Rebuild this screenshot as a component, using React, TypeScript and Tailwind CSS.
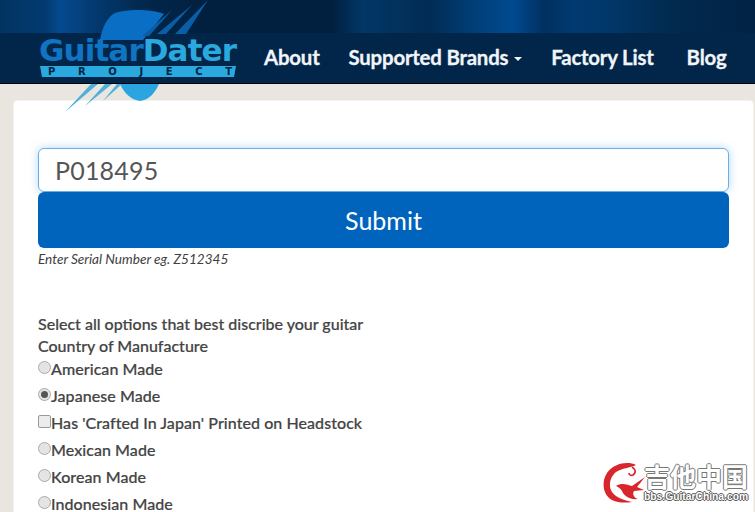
const options = [
  { type: "radio", label: "American Made", checked: false },
  { type: "radio", label: "Japanese Made", checked: true },
  { type: "checkbox", label: "Has 'Crafted In Japan' Printed on Headstock", checked: false },
  { type: "radio", label: "Mexican Made", checked: false },
  { type: "radio", label: "Korean Made", checked: false },
  { type: "radio", label: "Indonesian Made", checked: false },
];

function Logo() {
  return (
    <div className="absolute left-[39px] top-0 w-[200px] h-[114px]">
      <svg width="200" height="114" viewBox="0 0 200 114" className="absolute left-0 top-0">
        {/* pick, top half */}
        <path d="M61 40C63 28 68 17 76 13C88 9 112 9 125 14L104 40Z" fill="#0a6fc4" />
        {/* streaks, top half */}
        <path d="M169 0L147 34L136 34ZM153 5L127 34L118 34ZM133 10L110 36L103 36Z" fill="#0a5ea8" />
        {/* pick, bottom half */}
        <path d="M81 84H120C116 93 110 100 101 101C92 100 85 93 81 84Z" fill="#2aa5e0" />
        {/* streaks, bottom half */}
        <path d="M52 84H59L26 112ZM66 84H73L46 106ZM78 84H83L64 101Z" fill="#4fb0dc" />
        {/* project banner */}
        <path d="M1 66H197L195 77H3Z" fill="#2aa9df" />
      </svg>
      <div className="absolute left-0 top-[35px] flex font-['DejaVu_Sans',sans-serif] font-bold text-[31px] leading-[30px] tracking-[-0.9px]">
        <span className="text-[#0f74c4]">Guitar</span>
        <span className="text-[#2aa9df]">Dater</span>
      </div>
      <div className="absolute left-[9px] top-[66px] w-[184px] h-[11px] flex justify-between font-['DejaVu_Sans',sans-serif] font-bold text-[10px] leading-[11px] text-[#02233f]">
        {"PROJECT".split("").map((c, i) => (
          <span key={i}>{c}</span>
        ))}
      </div>
    </div>
  );
}

function Dragon() {
  return (
    <svg width="44" height="42" viewBox="0 0 44 42" className="shrink-0">
      <path
        d="M34 3C26 -1 12 1 5 11C-1 20 1 33 10 38C16 41 24 41 30 40C22 38 14 36 10 30C6 24 8 15 14 10C20 6 28 6 34 3Z"
        fill="#d8262c"
      />
      <path d="M30 5C33 7 35 10 31 13C29 14 27 13 27 11" fill="none" stroke="#d8262c" strokeWidth="1.6" />
      <path
        d="M14 24C20 20 26 23 30 24L43 15L35 25L42 28L32 29C30 32 32 36 36 37C28 38 22 34 20 29C18 26 16 25 14 24Z"
        fill="#d8262c"
      />
    </svg>
  );
}

function Watermark() {
  return (
    <div className="absolute left-[602px] top-[462px] flex items-start">
      <Dragon />
      <div className="flex flex-col ml-[-2px] w-[106px]">
        <div className="font-['Noto_Sans_CJK_SC',sans-serif] font-bold text-[26px] leading-[28px] text-white whitespace-nowrap [text-shadow:1px_0_0_#777,-1px_0_0_#777,0_1px_0_#777,0_-1px_0_#777]">
          吉他中国
        </div>
        <div className="font-['Liberation_Sans',sans-serif] font-bold text-[10.3px] leading-[12px] mt-[1px] text-white whitespace-nowrap [text-shadow:1px_0_0_#555,-1px_0_0_#555,0_1px_0_#555,0_-1px_0_#555]">
          bbs.GuitarChina.com
        </div>
      </div>
    </div>
  );
}

export default function App() {
  return (
    <div className="relative h-[512px] w-[755px] overflow-hidden bg-[#e8e6df] font-['Lato',sans-serif]">
      <header>
        <div className="h-[33px] bg-[linear-gradient(90deg,#023462_0%,#023a70_6%,#054a90_8%,#03386c_13%,#012649_20%,#011f3f_28%,#011f3f_44%,#023766_48%,#012c55_57%,#013f78_63%,#014a90_68%,#013060_72%,#013a70_76%,#01386a_80%,#012a4f_89%,#012244_100%)]" />
        <nav className="h-[51px] bg-[#02264a] border-b border-b-black flex items-center pl-[264px] pb-[1px] font-bold text-[20.4px] tracking-[-0.2px] text-[#f1f5f8] [-webkit-text-stroke:0.3px_#f1f5f8]">
          <a className="mr-[29px]">About</a>
          <a className="mr-[29px] flex items-center">
            Supported Brands
            <span className="ml-[6px] mt-[3px] border-x-[4px] border-x-transparent border-t-[4px] border-t-[#f1f5f8]" />
          </a>
          <a className="mr-[33px]">Factory List</a>
          <a>Blog</a>
        </nav>
      </header>

      <main className="ml-[13px] mt-[16px] w-[741px] h-[500px] bg-white rounded-[4px] border border-[#f3f2ee] px-[24px] pt-[47px] text-[#444]">
        <input
          readOnly
          value="P018495"
          className="block w-[691px] h-[44px] rounded-[6px] border border-[#66afe9] px-[16px] text-[25px] text-[#555] tracking-[0.2px] shadow-[0_0_8px_rgba(102,175,233,0.5)] outline-none"
        />
        <button className="block w-[691px] h-[56px] pt-[2px] rounded-[6px] bg-[#0064bd] text-white text-[25px]">
          Submit
        </button>
        <p className="mt-[1px] text-[13.6px] leading-[20px] italic text-[#404040]">
          Enter Serial Number eg. Z512345
        </p>

        <div className="mt-[44px] text-[16px] leading-[22px] font-medium text-[#444] [-webkit-text-stroke:0.2px_#444]">
          <p>Select all options that best discribe your guitar</p>
          <p>Country of Manufacture</p>
          {options.map((o) => (
            <label key={o.label} className="flex items-start h-[27px] pt-[1px] tracking-[0.06px]">
              {o.type === "radio" ? (
                <span className="w-[13px] h-[13px] mt-[3px] rounded-full border border-[#aaa] bg-[#e4e4e4] flex items-center justify-center">
                  {o.checked && <span className="w-[7px] h-[7px] rounded-full bg-[#555]" />}
                </span>
              ) : (
                <span className="w-[13px] h-[13px] mt-[3px] rounded-[2px] border border-[#999] bg-[#ececec]" />
              )}
              {o.label}
            </label>
          ))}
        </div>
      </main>

      <Logo />
      <Watermark />
    </div>
  );
}
